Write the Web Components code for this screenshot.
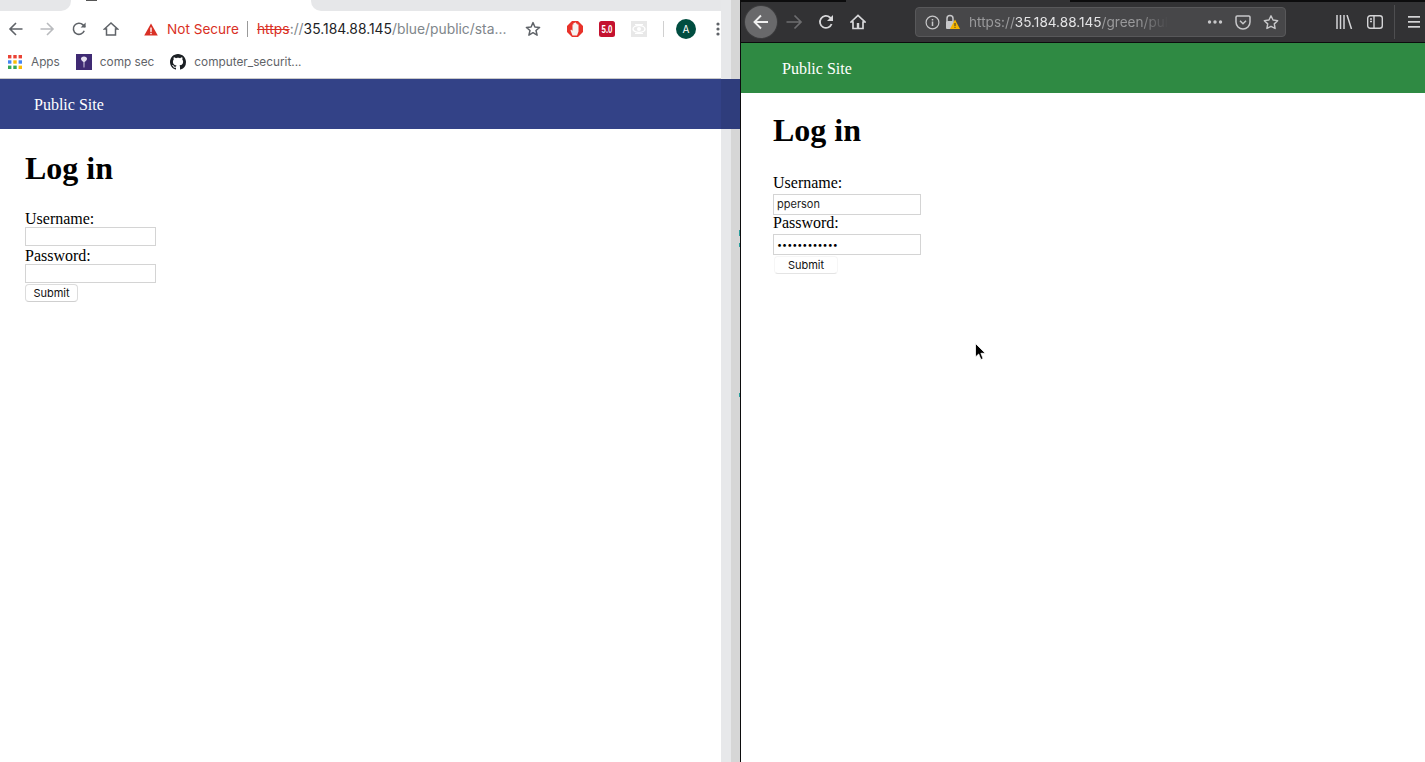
<!DOCTYPE html>
<html>
<head>
<meta charset="utf-8">
<title>Public Site</title>
<style>
  html, body { margin: 0; height: 100%; background: #fff; overflow: hidden; }
  body { font-family: "Liberation Serif", serif; }
  #desk { position: relative; display: flex; width: 1425px; height: 762px; }
</style>
</head>
<body>
<div id="desk">
  <chrome-window>
    <site-page color="#334287" style="--pad:25px; --brand:34px; --gap-top:21px; --field-w:131px; --field-h:19px; --label-h:18px; --label-lh:20px; --h1-bottom:22px;"></site-page>
  </chrome-window>
  <firefox-window>
    <site-page color="#2f8a43" username="pperson" password="••••••••••••" style="--pad:32px; --brand:41px; --gap-top:19px; --field-w:148px; --field-h:21px; --label-h:19px; --label-lh:15px; --h1-bottom:26px; --btn-w:64px; --btn-ml:1px; --btn-border:#f6f6f6; --btn-bottom:#e4e4e4;"></site-page>
  </firefox-window>
  <mouse-cursor></mouse-cursor>
</div>

<script>
class SitePage extends HTMLElement {
  constructor () {
    super()
    this.shadow = this.attachShadow({ mode: 'open' })
  }

  connectedCallback () {
    const color = this.getAttribute('color')
    const username = this.getAttribute('username') || ''
    const password = this.getAttribute('password') || ''
    this.shadow.innerHTML = /*html*/`
    <style>
      :host {
        display: block;
        flex: 1;
        background: #fff;
        color: #000;
        font: 16px/18px "Liberation Serif", serif;
      }
      nav {
        box-sizing: border-box;
        height: 50px;
        display: flex;
        align-items: center;
        padding: 2px 0 0 var(--brand);
        background: ${color};
        color: #fff;
      }
      main { padding: var(--gap-top) 0 0 var(--pad); }
      h1 { margin: 0 0 var(--h1-bottom); font-size: 32px; line-height: 37px; }
      label { display: block; height: var(--label-h); line-height: var(--label-lh); }
      .field {
        box-sizing: border-box;
        width: var(--field-w);
        height: var(--field-h);
        padding-left: 3px;
        border: 1px solid #d4d4d4;
        font: 11px/calc(var(--field-h) - 2px) "Inter", "Liberation Sans", sans-serif;
        color: #222;
      }
      .field.secret { font-size: 9px; color: #000; }
      button {
        display: block;
        box-sizing: border-box;
        width: var(--btn-w, 53px);
        height: 18px;
        margin: 1px 0 0 var(--btn-ml, 0);
        padding: 0;
        background: #fff;
        border: 1px solid var(--btn-border, #dcdcdc);
        border-bottom-color: var(--btn-bottom, #cfcfcf);
        border-radius: 4px;
        color: #111;
        font: 11px "Inter", "Liberation Sans", sans-serif;
      }
    </style>
    <nav>Public Site</nav>
    <main>
      <h1>Log in</h1>
      <label>Username:</label>
      <div class="field">${username}</div>
      <label>Password:</label>
      <div class="field secret">${password}</div>
      <button>Submit</button>
    </main>
    `
  }
}

class ChromeWindow extends HTMLElement {
  constructor () {
    super()
    this.shadow = this.attachShadow({ mode: 'open' })
  }

  connectedCallback () {
    this.shadow.innerHTML = /*html*/`
    <style>
      :host {
        position: relative;
        display: flex;
        flex-direction: column;
        width: 740px;
        height: 762px;
        flex: none;
        overflow: hidden;
        font-family: "Inter", "Liberation Sans", sans-serif;
      }
      .tabs { height: 11px; display: flex; background: #fff; flex: none; }
      .tabs .gray { background: #e6e7e9; }
      .tabs .left { width: 71px; border-bottom-right-radius: 10px; }
      .tabs .right { flex: 1; border-bottom-left-radius: 10px; }
      .tab { width: 240px; position: relative; }
      .tab::before {
        content: "";
        position: absolute;
        left: 15px;
        top: 0;
        width: 11px;
        height: 1px;
        background: #555;
      }
      .toolbar { height: 36px; display: flex; align-items: center; background: #fff; flex: none; }
      .btn { width: 32px; height: 24px; display: flex; align-items: center; justify-content: center; flex: none; }
      .btn:first-child { width: 31px; }
      .warn { margin-left: 14px; width: 20px; display: flex; justify-content: center; }
      .not-secure { margin-left: 6px; color: #d93025; font-size: 13.6px; white-space: nowrap; }
      .sep { width: 1px; height: 16px; background: #9a9a9a; margin: 0 9px 0 8px; flex: none; }
      .url { width: 256px; font-size: 13.85px; color: #80868b; white-space: nowrap; }
      .url s { color: #d93025; }
      .url b { font-weight: 400; color: #202124; }
      .icons { display: flex; align-items: center; margin-left: 12px; }
      .ext { width: 32px; display: flex; justify-content: center; flex: none; }
      .avatar {
        width: 20px;
        height: 20px;
        margin-left: 12px;
        border-radius: 50%;
        background: #004d40;
        color: #fff;
        font-size: 10px;
        line-height: 20px;
        text-align: center;
        flex: none;
      }
      .bookmarks {
        height: 29px;
        display: flex;
        align-items: center;
        padding: 0 0 2px 8px;
        background: #fff;
        border-bottom: 1px solid #c9c9c9;
        color: #5f6368;
        font-size: 11.8px;
        flex: none;
      }
      .bookmarks svg { flex: none; }
      .bookmarks span { margin: 0 16px 0 8px; white-space: nowrap; }
      ::slotted(*) { flex: 1; }
      .strip-a, .strip-b { position: absolute; top: 0; bottom: 0; }
      .strip-a { left: 721px; width: 10px; background: #e7e8ea; }
      .strip-b { left: 731px; width: 9px; background: #d6d6d6; }
      .strip-blue { position: absolute; left: 721px; width: 19px; top: 79px; height: 50px; background: #2f3d7c; }
      .speck { position: absolute; left: 739px; width: 1px; background: #2a9d9d; }
    </style>
    <div class="tabs"><div class="gray left"></div><div class="tab"></div><div class="gray right"></div></div>
    <div class="toolbar">
      <div class="btn"><svg width="16" height="16" viewBox="0 0 16 16" fill="none" stroke="#5f6368" stroke-width="1.6"><path d="M14.5 8H2M8 2 2 8l6 6"/></svg></div>
      <div class="btn"><svg width="16" height="16" viewBox="0 0 16 16" fill="none" stroke="#b9bbbe" stroke-width="1.6"><path d="M1.5 8H14M8 2l6 6-6 6"/></svg></div>
      <div class="btn"><svg width="16" height="16" viewBox="0 0 16 16" fill="none" stroke="#5f6368" stroke-width="1.6"><path d="M13.2 9.8A5.6 5.6 0 1 1 12 3.9L14 6"/><path d="M14.6 1.6v5h-5" fill="#5f6368" stroke="none"/></svg></div>
      <div class="btn"><svg width="16" height="16" viewBox="0 0 16 16" fill="none" stroke="#5f6368" stroke-width="1.5"><path d="M1.5 8 8 2l6.5 6H12.5v6h-9V8z"/></svg></div>
      <div class="warn"><svg width="14" height="13" viewBox="0 0 14 13"><path d="M7 .5 13.8 12.5H.2z" fill="#d93025"/><rect x="6.3" y="4.5" width="1.4" height="4.4" fill="#fff"/><rect x="6.3" y="9.8" width="1.4" height="1.4" fill="#fff"/></svg></div>
      <div class="not-secure">Not Secure</div>
      <div class="sep"></div>
      <div class="url"><s>https</s>://<b>35.184.88.145</b>/blue/public/sta...</div>
      <div class="icons">
        <svg width="16" height="16" viewBox="0 0 16 16" fill="none" stroke="#5f6368" stroke-width="1.5" stroke-linejoin="round"><path d="M8 1.600 9.900 6l4.700.4-3.600 3.100 1.100 4.700L8 11.700l-4.100 2.500L5 9.500 1.400 6.400 6.100 6z"/></svg>
        <div class="ext" style="margin-left:18px"><svg width="16" height="16" viewBox="0 0 16 16"><path d="M5 0h6l5 5v6l-5 5H5l-5-5V5z" fill="#e8322a"/><path d="M5.500 14.500 3.500 9.500 4 8.500l1.500 1.200V3.500h1V2h1.200v-.4h1.300V2.500h1.300v1h1.200v7l-1.500 4z" fill="#f6f3f1"/></svg></div>
        <div class="ext"><svg width="16" height="16" viewBox="0 0 16 16"><rect width="16" height="16" rx="2.500" fill="#c4122f"/><text x="8" y="12" text-anchor="middle" font-family="Liberation Sans" font-size="10.500" font-weight="700" fill="#fff" textLength="11" lengthAdjust="spacingAndGlyphs">5.0</text></svg></div>
        <div class="ext"><svg width="16" height="16" viewBox="0 0 16 16"><rect width="16" height="16" fill="#e8e8e8"/><ellipse cx="8" cy="8" rx="6" ry="3.500" fill="none" stroke="#fff" stroke-width="1.400"/><circle cx="8" cy="8" r="2" fill="#fff"/><path d="M4 3.500h8M4 12.500h8" stroke="#fff"/></svg></div>
        <div class="sep" style="margin:0 0 0 8px; background:#d0d0d0"></div>
        <div class="avatar">A</div>
        <div class="ext" style="margin-left:6px"><svg width="4" height="14" viewBox="0 0 4 14" fill="#5f6368"><circle cx="2" cy="2" r="1.600"/><circle cx="2" cy="7" r="1.600"/><circle cx="2" cy="12" r="1.600"/></svg></div>
      </div>
    </div>
    <div class="bookmarks">
      <svg width="14" height="14" viewBox="0 0 14 14"><rect width="3.400" height="3.400" fill="#ea4335"/><rect x="5.300" width="3.400" height="3.400" fill="#ea4335"/><rect x="10.600" width="3.400" height="3.400" fill="#ea4335"/><rect y="5.300" width="3.400" height="3.400" fill="#4285f4"/><rect x="5.300" y="5.300" width="3.400" height="3.400" fill="#fbbc05"/><rect x="10.600" y="5.300" width="3.400" height="3.400" fill="#4285f4"/><rect y="10.600" width="3.400" height="3.400" fill="#34a853"/><rect x="5.300" y="10.600" width="3.400" height="3.400" fill="#34a853"/><rect x="10.600" y="10.600" width="3.400" height="3.400" fill="#fbbc05"/></svg>
      <span style="margin-left:9px">Apps</span>
      <svg width="16" height="16" viewBox="0 0 16 16"><rect width="16" height="16" fill="#3f2a73"/><path d="M8 2.500c1.800 0 3.200 1 3 2.600-.2 1.500-1.600 2.400-2.500 2.900L8.400 13.500H7.600L7.500 8C6.600 7.500 5.200 6.600 5 5.100 4.800 3.500 6.200 2.500 8 2.500z" fill="#e6e0f0"/></svg>
      <span>comp sec</span>
      <svg width="16" height="16" viewBox="0 0 16 16" fill="#1b1f23"><path d="M8 0C3.580 0 0 3.580 0 8c0 3.540 2.290 6.530 5.470 7.590.4.070.55-.17.55-.38 0-.19-.010-.82-.010-1.490-2.010.37-2.530-.49-2.690-.94-.09-.23-.48-.94-.82-1.130-.28-.15-.68-.52-.010-.53.63-.010 1.080.58 1.230.82.72 1.210 1.870.87 2.330.66.070-.52.28-.87.510-1.070-1.780-.2-3.640-.89-3.640-3.950 0-.87.31-1.590.82-2.150-.08-.2-.36-1.020.08-2.120 0 0 .67-.21 2.200.82.64-.18 1.320-.27 2-.27s1.360.09 2 .27c1.530-1.040 2.200-.82 2.200-.82.44 1.100.16 1.920.08 2.120.51.56.82 1.270.82 2.150 0 3.070-1.870 3.750-3.650 3.950.29.25.54.73.54 1.480 0 1.070-.010 1.930-.010 2.200 0 .21.15.46.55.38A8.010 8.010 0 0 0 16 8c0-4.420-3.580-8-8-8z"/></svg>
      <span>computer_securit...</span>
    </div>
    <slot></slot>
    <div class="strip-a"></div>
    <div class="strip-b"></div>
    <div class="strip-blue"></div>
    <div class="speck" style="top:230px; height:6px"></div>
    <div class="speck" style="top:243px; height:4px"></div>
    <div class="speck" style="top:393px; height:4px"></div>
    `
  }
}

class FirefoxWindow extends HTMLElement {
  constructor () {
    super()
    this.shadow = this.attachShadow({ mode: 'open' })
  }

  connectedCallback () {
    this.shadow.innerHTML = /*html*/`
    <style>
      :host {
        display: flex;
        flex-direction: column;
        flex: 1;
        height: 762px;
        box-sizing: border-box;
        border-left: 1px solid #0c0c0d;
        overflow: hidden;
        font-family: "Inter", "Liberation Sans", sans-serif;
      }
      .topline { height: 2px; display: flex; background: #0c0c0d; flex: none; }
      .topline i { display: block; width: 224px; margin-left: 105px; background: #323234; }
      .bar {
        height: 40px;
        display: flex;
        align-items: center;
        background: #323234;
        border-bottom: 1px solid #0c0c0d;
        flex: none;
      }
      .back {
        width: 32px;
        height: 32px;
        margin-left: 4px;
        border-radius: 50%;
        background: #69696b;
        box-shadow: 0 0 0 1px #3c3c3e;
        display: flex;
        align-items: center;
        justify-content: center;
        flex: none;
      }
      .btn { width: 32px; display: flex; justify-content: center; flex: none; }
      .urlbox {
        box-sizing: border-box;
        width: 371px;
        height: 30px;
        margin-left: 41px;
        background: #474749;
        border: 1px solid #58585a;
        border-radius: 4px;
        display: flex;
        align-items: center;
        padding-left: 9px;
        flex: none;
      }
      .url {
        margin-left: 9px;
        white-space: nowrap;
        font-size: 13.6px;
        color: #9a9a9c;
        -webkit-mask-image: linear-gradient(90deg, #000 85%, transparent);
        mask-image: linear-gradient(90deg, #000 85%, transparent);
      }
      .url b { font-weight: 400; color: #e4e4e6; }
      .page-actions { display: flex; align-items: center; margin-left: auto; margin-right: 6px; gap: 12px; }
      .sep { width: 1px; height: 34px; background: #4e4e50; flex: none; }
      ::slotted(*) { flex: 1; }
    </style>
    <div class="topline"><i></i></div>
    <div class="bar">
      <div class="back"><svg width="18" height="18" viewBox="0 0 18 18" fill="none" stroke="#f0f0f0" stroke-width="1.900"><path d="M16 9H2.500M9 2.500 2.500 9 9 15.500"/></svg></div>
      <div class="btn" style="margin-left:1px"><svg width="18" height="18" viewBox="0 0 18 18" fill="none" stroke="#6d6d6f" stroke-width="1.700"><path d="M1.500 9H15.500M9.500 2.500 16 9l-6.500 6.500"/></svg></div>
      <div class="btn"><svg width="16" height="16" viewBox="0 0 16 16" fill="none" stroke="#d8d8da" stroke-width="1.800"><path d="M13.600 10A6 6 0 1 1 12 3.500L14 5.500"/><path d="M15 1v6H9z" fill="#d8d8da" stroke="none"/></svg></div>
      <div class="btn"><svg width="16" height="16" viewBox="0 0 16 16" fill="none" stroke="#d8d8da" stroke-width="1.700"><path d="M1 8 8 1.500 15 8h-2v6.500H3V8z"/><rect x="6.800" y="9" width="2.400" height="5.500" fill="#d8d8da" stroke="none"/></svg></div>
      <div class="urlbox">
        <svg width="15" height="15" viewBox="0 0 15 15" fill="none" stroke="#c8c8ca" stroke-width="1.200" style="flex:none"><circle cx="7.500" cy="7.500" r="6.400"/><path d="M7.500 6.500v4.500M7.500 4v1.400" stroke-width="1.500"/></svg>
        <svg width="15" height="16" viewBox="0 0 15 16" style="margin-left:5px; flex:none"><path d="M2 7.500V4.500a3 3 0 0 1 6 0V7" fill="none" stroke="#c8c8ca" stroke-width="1.500"/><rect x="1" y="7" width="8" height="8" rx="1" fill="#c8c8ca"/><path d="M10 5.500 15 15H5z" fill="#f5b400"/><rect x="9.500" y="9" width="1" height="3" fill="#333"/><rect x="9.500" y="12.800" width="1" height="1" fill="#333"/></svg>
        <div class="url">https://<b>35.184.88.145</b>/green/pul</div>
        <div class="page-actions">
          <svg width="16" height="6" viewBox="0 0 16 6" fill="#c8c8ca"><circle cx="2.500" cy="3" r="1.700"/><circle cx="8" cy="3" r="1.700"/><circle cx="13.500" cy="3" r="1.700"/></svg>
          <svg width="16" height="15" viewBox="0 0 16 15" fill="none" stroke="#c8c8ca" stroke-width="1.500"><path d="M2.200 1h11.600A1.200 1.200 0 0 1 15 2.200V7A7 7 0 0 1 1 7V2.200A1.200 1.200 0 0 1 2.200 1z"/><path d="M5 5.800 8 8.800l3-3"/></svg>
          <svg width="16" height="16" viewBox="0 0 18 17" fill="none" stroke="#c8c8ca" stroke-width="1.600" stroke-linejoin="round"><path d="M9 1.500 11.300 6.300l5.200.7-3.800 3.600.9 5.200L9 13.300 4.400 15.800l.9-5.200L1.500 7l5.200-.7z"/></svg>
        </div>
      </div>
      <div style="display:flex; align-items:center; margin-left:49px">
        <svg width="18" height="14" viewBox="0 0 18 14" fill="none" stroke="#d4d4d6" stroke-width="1.500"><path d="M2 0v14M5.500 0v14M9 0v14M12 0l4.500 14"/></svg>
        <svg width="16" height="14" viewBox="0 0 16 14" fill="none" stroke="#d4d4d6" stroke-width="1.400" style="margin-left:14px"><rect x=".7" y=".7" width="14.600" height="12.600" rx="2.500"/><path d="M7 .7v12.600M3 4h2M3 6.500h2"/></svg>
        <div class="sep" style="margin-left:11px"></div>
        <svg width="12" height="12" viewBox="0 0 12 12" fill="#d4d4d6" style="margin-left:13px"><rect y="0" width="12" height="1.700"/><rect y="5" width="12" height="1.700"/><rect y="10" width="12" height="1.700"/></svg>
      </div>
    </div>
    <slot></slot>
    `
  }
}

class MouseCursor extends HTMLElement {
  constructor () {
    super()
    this.shadow = this.attachShadow({ mode: 'open' })
  }

  connectedCallback () {
    this.shadow.innerHTML = /*html*/`
    <style>
      :host { position: absolute; left: 975px; top: 343px; width: 12px; height: 18px; }
      svg { display: block; }
    </style>
    <svg width="12" height="18" viewBox="0 0 12 18"><path d="M.5.500V14l3.200-3 2.200 5.500 2.200-.9-2.200-5.300h4.400z" fill="#000" stroke="#fff" stroke-width=".8"/></svg>
    `
  }
}

customElements.define('site-page', SitePage)
customElements.define('chrome-window', ChromeWindow)
customElements.define('firefox-window', FirefoxWindow)
customElements.define('mouse-cursor', MouseCursor)
</script>
</body>
</html>
